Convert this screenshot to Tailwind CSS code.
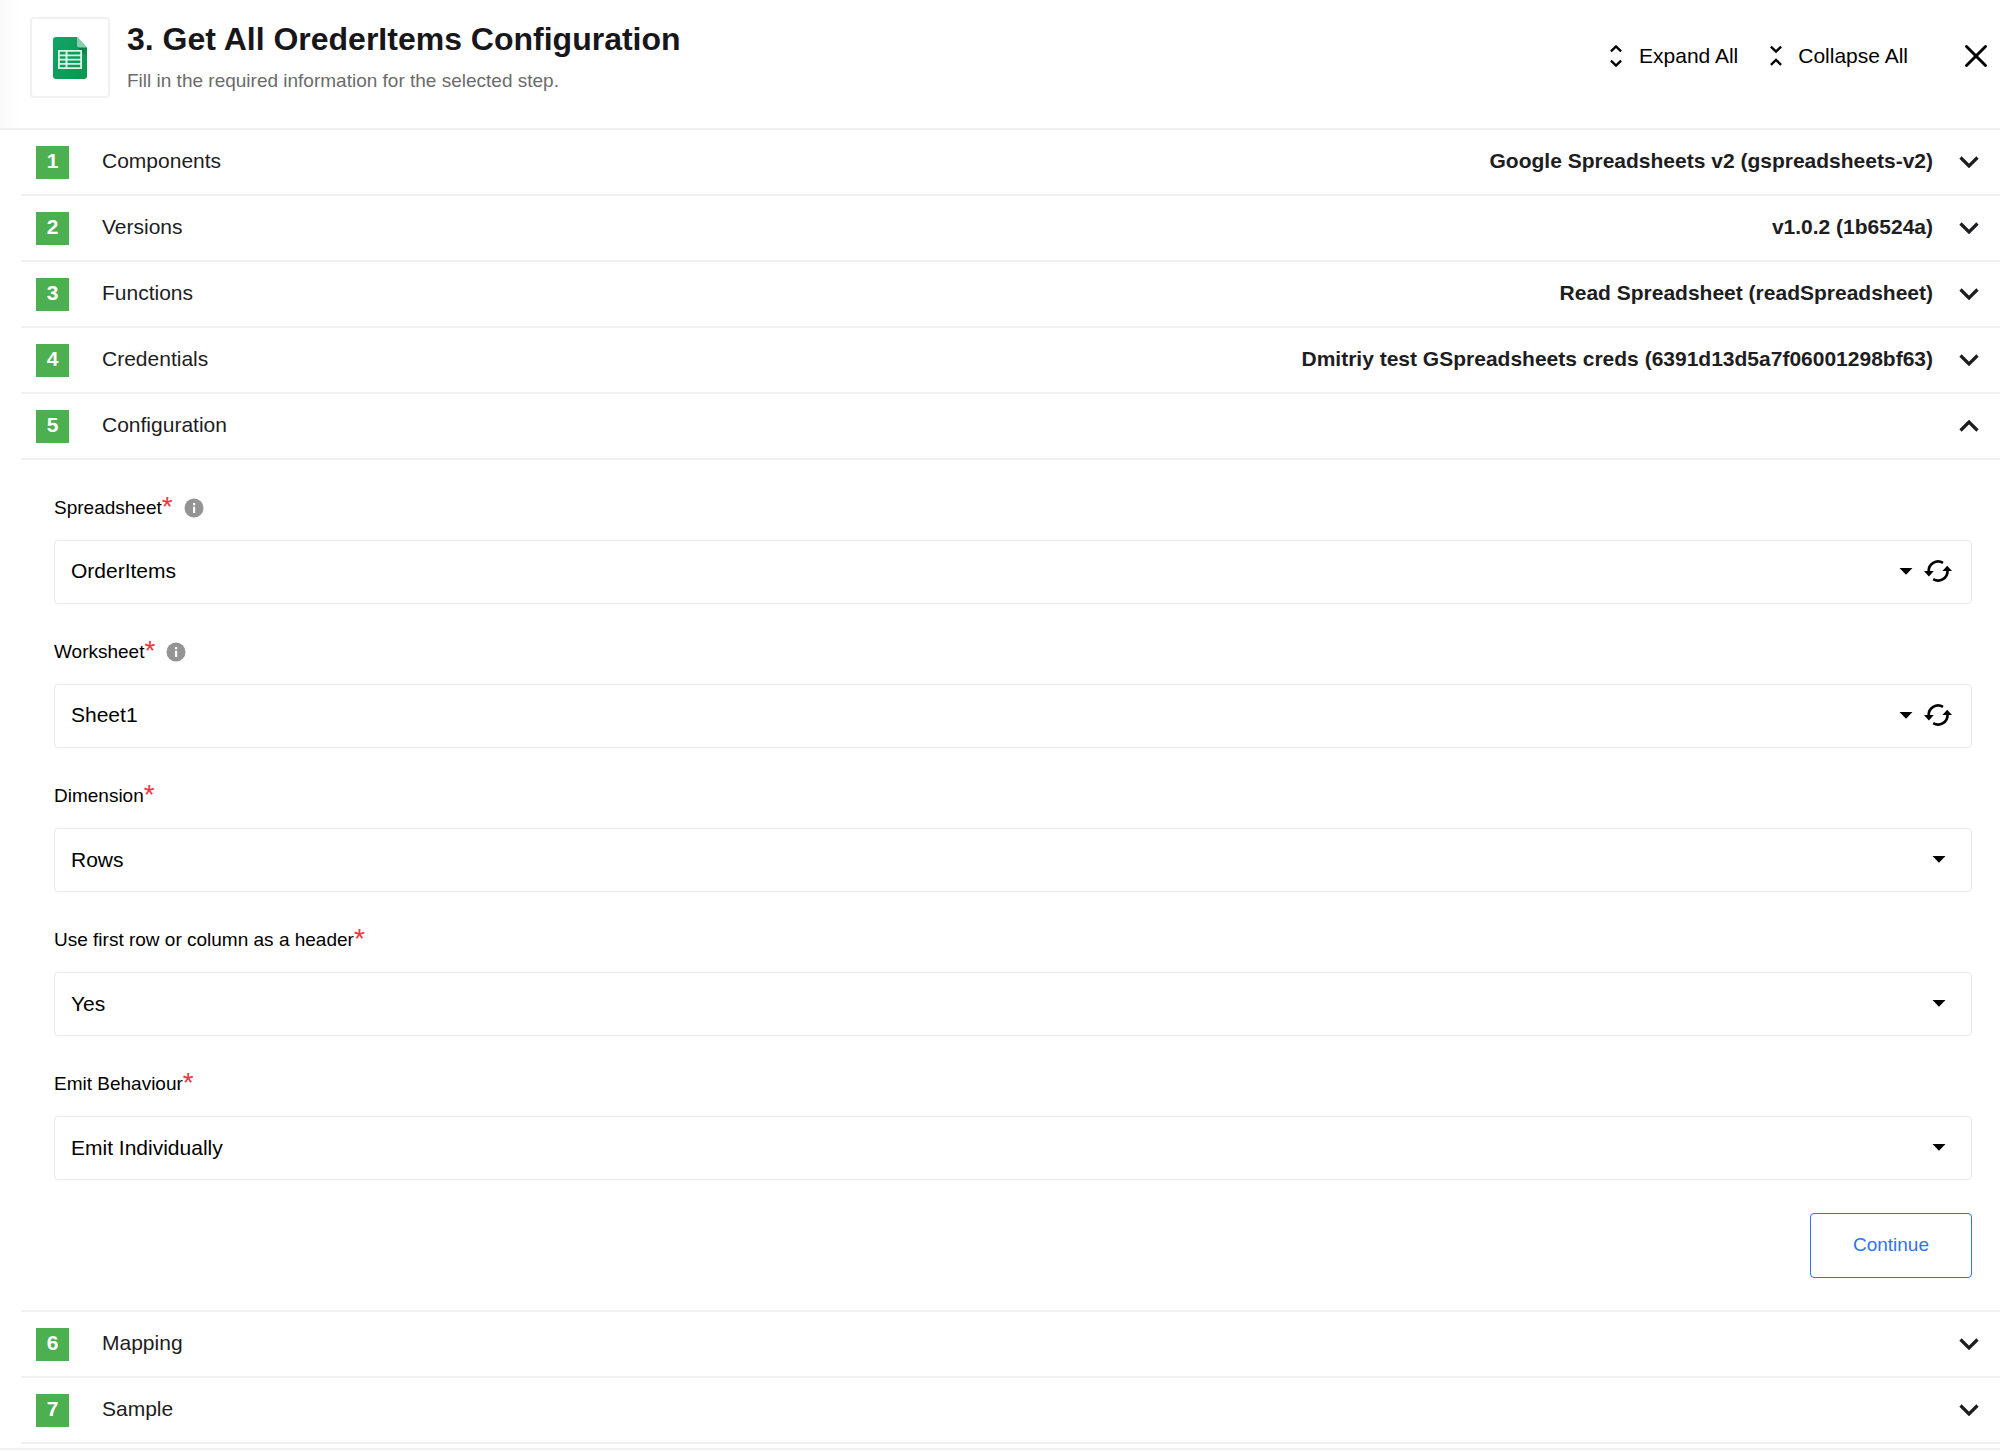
<!DOCTYPE html>
<html lang="en">
<head>
<meta charset="utf-8">
<meta name="viewport" content="width=device-width, initial-scale=1">
<title>Get All OrederItems Configuration</title>
<script src="https://cdn.jsdelivr.net/npm/@tailwindcss/browser@4"></script>
</head>
<body class="bg-white font-['Liberation_Sans',Arial,sans-serif] text-[21px] leading-6 text-[#1d1d22]">

<svg class="hidden" aria-hidden="true">
  <symbol id="chevron" viewBox="0 0 20 12"><path d="M1.500 1.500 10 10 18.500 1.500" fill="none" stroke="currentColor" stroke-width="3.200"/></symbol>
  <symbol id="caret" viewBox="0 0 14 7"><path d="M0.500 0h13L7 6.800z" fill="currentColor"/></symbol>
  <symbol id="refresh" viewBox="0 0 28 24">
    <path d="M19 3.800A9.500 9.500 0 0 0 4.700 12.500" fill="none" stroke="currentColor" stroke-width="2.700"/>
    <path d="M9.200 20.200A9.500 9.500 0 0 0 23.500 11.500" fill="none" stroke="currentColor" stroke-width="2.700"/>
    <path d="M0 12h9.800L4.900 17.400zM28 12h-9.600l4.800-5.300z" fill="currentColor"/>
  </symbol>
  <symbol id="info" viewBox="0 0 20 20">
    <circle cx="10" cy="10" r="9.500" fill="#949494"/>
    <path d="M9 5h2.200v2.200H9zM9 8.800h2.200V15H9z" fill="#fff"/>
  </symbol>
</svg>

<main>
  <header class="flex h-[130px] items-start border-b-2 border-[#f0f0f0] bg-linear-to-r from-[#fafafa] via-white via-1% to-white pt-[17px] pr-3 pl-[30px]">
    <div class="flex h-[81px] w-20 shrink-0 items-center justify-center rounded-sm border-2 border-[#f1f1f1] bg-white">
      <svg class="h-[42px] w-[34px]" viewBox="0 0 34 42" role="img" aria-label="Google Sheets">
        <defs>
          <linearGradient id="sheet" x1="0" y1="0" x2="1" y2="1"><stop offset="0" stop-color="#12a566"/><stop offset="1" stop-color="#0a9650"/></linearGradient>
          <linearGradient id="shade" x1="0" y1="0" x2="1" y2="1"><stop offset="0" stop-color="#06733f"/><stop offset="1" stop-color="#0a9650"/></linearGradient>
        </defs>
        <path d="M3 0h21l10 10.500V39a3 3 0 0 1-3 3H3a3 3 0 0 1-3-3V3a3 3 0 0 1 3-3z" fill="url(#sheet)"/>
        <path d="M24.500 10.500H34V20z" fill="url(#shade)"/>
        <path d="M24 0l10 10.500h-8a2 2 0 0 1-2-2z" fill="#87ceac"/>
        <path d="M5 13h24v19H5zM6.800 14.800v2.700h5.700v-2.700zm7.700 0v2.700h12.700v-2.700zM6.800 19.200v2.500h5.700v-2.500zm7.700 0v2.500h12.700v-2.500zM6.800 23.400v2.500h5.700v-2.500zm7.700 0v2.500h12.700v-2.500zM6.800 27.700v2.500h5.700v-2.500zm7.700 0v2.500h12.700v-2.500z" fill="#dff1e7" fill-rule="evenodd"/>
      </svg>
    </div>
    <div class="ml-[17px] grow">
      <h1 class="text-[32px] leading-[44px] font-bold text-[#17171b]">3. Get All OrederItems Configuration</h1>
      <p class="text-[19px] leading-10 text-[#6b6b6b]">Fill in the required information for the selected step.</p>
    </div>
    <div class="flex h-[78px] items-center text-black">
      <button type="button" class="flex h-8 items-center">
        <svg class="mr-[17px] h-[22px] w-3" viewBox="0 0 12 22" fill="none" stroke="currentColor" stroke-width="2.400" aria-hidden="true"><path d="M.9 6.300 6 1.500l5.100 4.800M.9 15.700 6 20.500l5.100-4.800"/></svg>
        Expand All</button>
      <button type="button" class="ml-8 flex h-8 items-center">
        <svg class="mr-4 h-[22px] w-3" viewBox="0 0 12 22" fill="none" stroke="currentColor" stroke-width="2.400" aria-hidden="true"><path d="M.9 1.700 6 6.500l5.100-4.800M.9 19.800 6 15l5.100 4.800"/></svg>
        Collapse All</button>
      <button type="button" aria-label="Close" class="ml-[56px]">
        <svg class="size-6" viewBox="0 0 24 24" fill="none" stroke="currentColor" stroke-width="3" stroke-linecap="round" aria-hidden="true"><path d="M2.500 2.500l19 19M21.500 2.500l-19 19"/></svg>
      </button>
    </div>
  </header>

  <div class="pl-[21px]">
    <button type="button" class="flex h-[66px] w-full items-center border-b-2 border-[#f1f1f1] pr-[21px] pl-[15px]">
      <span class="flex size-[33px] items-center justify-center bg-[#4caf50] pb-[2px] font-bold text-white">1</span>
      <span class="ml-[33px] pb-[2px]">Components</span>
      <span class="ml-auto pb-[2px] font-bold">Google Spreadsheets v2 (gspreadsheets-v2)</span>
      <svg class="ml-[26px] h-3 w-5" aria-hidden="true"><use href="#chevron"/></svg>
    </button>
    <button type="button" class="flex h-[66px] w-full items-center border-b-2 border-[#f1f1f1] pr-[21px] pl-[15px]">
      <span class="flex size-[33px] items-center justify-center bg-[#4caf50] pb-[2px] font-bold text-white">2</span>
      <span class="ml-[33px] pb-[2px]">Versions</span>
      <span class="ml-auto pb-[2px] font-bold">v1.0.2 (1b6524a)</span>
      <svg class="ml-[26px] h-3 w-5" aria-hidden="true"><use href="#chevron"/></svg>
    </button>
    <button type="button" class="flex h-[66px] w-full items-center border-b-2 border-[#f1f1f1] pr-[21px] pl-[15px]">
      <span class="flex size-[33px] items-center justify-center bg-[#4caf50] pb-[2px] font-bold text-white">3</span>
      <span class="ml-[33px] pb-[2px]">Functions</span>
      <span class="ml-auto pb-[2px] font-bold">Read Spreadsheet (readSpreadsheet)</span>
      <svg class="ml-[26px] h-3 w-5" aria-hidden="true"><use href="#chevron"/></svg>
    </button>
    <button type="button" class="flex h-[66px] w-full items-center border-b-2 border-[#f1f1f1] pr-[21px] pl-[15px]">
      <span class="flex size-[33px] items-center justify-center bg-[#4caf50] pb-[2px] font-bold text-white">4</span>
      <span class="ml-[33px] pb-[2px]">Credentials</span>
      <span class="ml-auto pb-[2px] font-bold">Dmitriy test GSpreadsheets creds (6391d13d5a7f06001298bf63)</span>
      <svg class="ml-[26px] h-3 w-5" aria-hidden="true"><use href="#chevron"/></svg>
    </button>
    <button type="button" aria-expanded="true" class="flex h-[66px] w-full items-center border-b-2 border-[#f1f1f1] pr-[21px] pl-[15px]">
      <span class="flex size-[33px] items-center justify-center bg-[#4caf50] pb-[2px] font-bold text-white">5</span>
      <span class="ml-[33px] pb-[2px]">Configuration</span>
      <svg class="ml-auto h-3 w-5 rotate-180" aria-hidden="true"><use href="#chevron"/></svg>
    </button>

    <form class="flex flex-col border-b-2 border-[#f1f1f1] pt-8 pr-7 pb-8 pl-[33px] text-black">
      <div class="mb-8">
        <div class="mb-4 flex h-8 items-center">
          <label for="spreadsheet" class="flex text-[19px] leading-8">Spreadsheet<span class="text-[28px] leading-[30px] text-[#f5333f]">*</span></label>
          <svg class="ml-[11px] size-5" role="img" aria-label="About Spreadsheet"><use href="#info"/></svg>
        </div>
        <div class="relative">
          <select id="spreadsheet" class="h-16 w-full appearance-none rounded-sm border border-[#e8e8e8] bg-white pr-24 pb-[2px] pl-4"><option>OrderItems</option></select>
          <svg class="pointer-events-none absolute top-7 right-[59px] h-[7px] w-[14px]" aria-hidden="true"><use href="#caret"/></svg>
          <button type="button" aria-label="Refresh spreadsheets" class="absolute top-[19px] right-5"><svg class="h-6 w-7" aria-hidden="true"><use href="#refresh"/></svg></button>
        </div>
      </div>
      <div class="mb-8">
        <div class="mb-4 flex h-8 items-center">
          <label for="worksheet" class="flex text-[19px] leading-8">Worksheet<span class="text-[28px] leading-[30px] text-[#f5333f]">*</span></label>
          <svg class="ml-[11px] size-5" role="img" aria-label="About Worksheet"><use href="#info"/></svg>
        </div>
        <div class="relative">
          <select id="worksheet" class="h-16 w-full appearance-none rounded-sm border border-[#e8e8e8] bg-white pr-24 pb-[2px] pl-4"><option>Sheet1</option></select>
          <svg class="pointer-events-none absolute top-7 right-[59px] h-[7px] w-[14px]" aria-hidden="true"><use href="#caret"/></svg>
          <button type="button" aria-label="Refresh worksheets" class="absolute top-[19px] right-5"><svg class="h-6 w-7" aria-hidden="true"><use href="#refresh"/></svg></button>
        </div>
      </div>
      <div class="mb-8">
        <div class="mb-4 flex h-8 items-center">
          <label for="dimension" class="flex text-[19px] leading-8">Dimension<span class="text-[28px] leading-[30px] text-[#f5333f]">*</span></label>
        </div>
        <div class="relative">
          <select id="dimension" class="h-16 w-full appearance-none rounded-sm border border-[#e8e8e8] bg-white pr-16 pb-px pl-4"><option>Rows</option></select>
          <svg class="pointer-events-none absolute top-7 right-[26px] h-[7px] w-[14px]" aria-hidden="true"><use href="#caret"/></svg>
        </div>
      </div>
      <div class="mb-8">
        <div class="mb-4 flex h-8 items-center">
          <label for="header" class="flex text-[19px] leading-8">Use first row or column as a header<span class="text-[28px] leading-[30px] text-[#f5333f]">*</span></label>
        </div>
        <div class="relative">
          <select id="header" class="h-16 w-full appearance-none rounded-sm border border-[#e8e8e8] bg-white pr-16 pb-px pl-4"><option>Yes</option></select>
          <svg class="pointer-events-none absolute top-7 right-[26px] h-[7px] w-[14px]" aria-hidden="true"><use href="#caret"/></svg>
        </div>
      </div>
      <div class="mb-[33px]">
        <div class="mb-4 flex h-8 items-center">
          <label for="emit" class="flex text-[19px] leading-8">Emit Behaviour<span class="text-[28px] leading-[30px] text-[#f5333f]">*</span></label>
        </div>
        <div class="relative">
          <select id="emit" class="h-16 w-full appearance-none rounded-sm border border-[#e8e8e8] bg-white pr-16 pb-px pl-4"><option>Emit Individually</option></select>
          <svg class="pointer-events-none absolute top-7 right-[26px] h-[7px] w-[14px]" aria-hidden="true"><use href="#caret"/></svg>
        </div>
      </div>
      <button type="submit" class="h-[65px] self-end rounded-sm border border-[#2f6ff0] px-[42px] pb-[2px] text-[19px] text-[#2f72f3]">Continue</button>
    </form>

    <button type="button" class="flex h-[66px] w-full items-center border-b-2 border-[#f1f1f1] pr-[21px] pl-[15px]">
      <span class="flex size-[33px] items-center justify-center bg-[#4caf50] pb-[2px] font-bold text-white">6</span>
      <span class="ml-[33px] pb-[2px]">Mapping</span>
      <svg class="ml-auto h-3 w-5" aria-hidden="true"><use href="#chevron"/></svg>
    </button>
    <button type="button" class="flex h-[66px] w-full items-center border-b-2 border-[#f1f1f1] pr-[21px] pl-[15px]">
      <span class="flex size-[33px] items-center justify-center bg-[#4caf50] pb-[2px] font-bold text-white">7</span>
      <span class="ml-[33px] pb-[2px]">Sample</span>
      <svg class="ml-auto h-3 w-5" aria-hidden="true"><use href="#chevron"/></svg>
    </button>
  </div>
  <div class="h-[6px] border-b-2 border-[#f1f1f1]"></div>
</main>
</body>
</html>
